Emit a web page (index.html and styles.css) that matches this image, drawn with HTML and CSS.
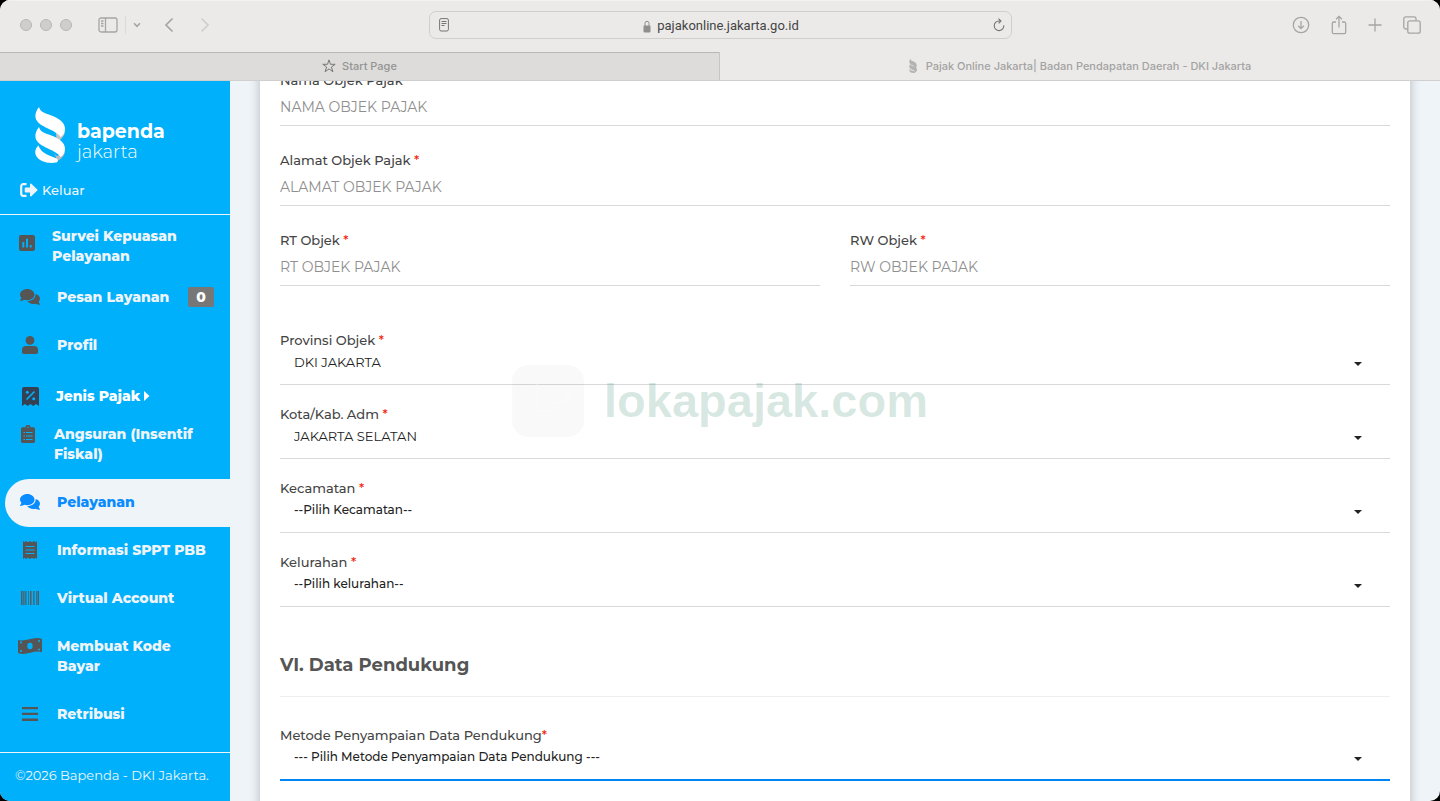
FILE: index.html
```html
<!DOCTYPE html>
<html lang="id">
<head>
<meta charset="utf-8">
<meta name="viewport" content="width=device-width, initial-scale=1">
<title>Pajak Online Jakarta| Badan Pendapatan Daerah - DKI Jakarta</title>
<link rel="stylesheet" href="styles.css">
</head>
<body>
<div class="window">
  <header class="toolbar">
    <div class="tools tools-left">
      <div class="lights"><i class="light"></i><i class="light"></i><i class="light"></i></div>
      <button class="tool" type="button" aria-label="Sidebar">
        <svg width="20" height="16" viewBox="0 0 20 16"><rect x="1" y="1" width="18" height="14" rx="2"/><path d="M7.500 1v14M3 4h2.500M3 6.500h2.500M3 9h2.500"/></svg>
      </button>
      <span class="divider"></span>
      <button class="tool tool-menu" type="button" aria-label="Grup tab">
        <svg width="8" height="6" viewBox="0 0 8 6"><path d="M1 1.300l3 3 3-3" stroke-width="1.600"/></svg>
      </button>
      <button class="tool tool-back" type="button" aria-label="Kembali">
        <svg width="10" height="16" viewBox="0 0 10 16"><path d="M8.500 1.500L2 8l6.500 6.500" stroke-width="1.700"/></svg>
      </button>
      <button class="tool tool-forward" type="button" aria-label="Maju">
        <svg width="10" height="16" viewBox="0 0 10 16"><path d="M1.500 1.500L8 8l-6.500 6.500" stroke-width="1.700"/></svg>
      </button>
    </div>
    <div class="address">
      <svg class="reader" width="10" height="14" viewBox="0 0 10 14"><rect x=".6" y=".6" width="8.800" height="12.400" rx="1.500"/><path d="M2.500 3.500h5M2.500 5.500h5M2.500 7.500h3"/></svg>
      <span class="site">
        <svg width="8" height="13" viewBox="0 0 8 13"><rect x=".5" y="5.500" width="7" height="7" rx="1" fill="#8f8f8f" stroke="none"/><path d="M2 6V3.300a2 2 0 0 1 4 0V6" stroke="#8f8f8f"/></svg>
        pajakonline.jakarta.go.id
      </span>
      <button class="tool reload" type="button" aria-label="Muat ulang">
        <svg width="12" height="14" viewBox="0 0 12 14"><path d="M10.800 7.300A4.800 4.800 0 1 1 6 3h1.800M5.500.7L8 3 5.600 5.400" stroke-width="1.100"/></svg>
      </button>
    </div>
    <div class="tools tools-right">
      <button class="tool" type="button" aria-label="Unduhan">
        <svg width="18" height="18" viewBox="0 0 18 18"><circle cx="9" cy="9" r="7.700"/><path d="M9 5v7.500M6.200 9.800L9 12.600l2.800-2.800"/></svg>
      </button>
      <button class="tool" type="button" aria-label="Bagikan">
        <svg width="16" height="20" viewBox="0 0 16 20"><path d="M5 7H2.800A1.500 1.500 0 0 0 1.300 8.500v8.700a1.500 1.500 0 0 0 1.500 1.500h10.400a1.500 1.500 0 0 0 1.500-1.500V8.500A1.500 1.500 0 0 0 13.200 7H11M8 12.500V1.500M5 4.300l3-3 3 3"/></svg>
      </button>
      <button class="tool" type="button" aria-label="Tab baru">
        <svg width="14" height="14" viewBox="0 0 14 14"><path d="M7 .5v13M.5 7h13"/></svg>
      </button>
      <button class="tool" type="button" aria-label="Semua tab">
        <svg width="18" height="18" viewBox="0 0 18 18"><rect x="4.800" y="4.800" width="12.400" height="12.400" rx="2"/><path d="M4.500 13H2.800a2 2 0 0 1-2-2V2.800a2 2 0 0 1 2-2H11a2 2 0 0 1 2 2v1.700"/></svg>
      </button>
    </div>
  </header>
  <nav class="tabs" aria-label="Tab">
    <a class="tab tab-start" href="#">
      <svg width="14" height="14" viewBox="0 0 14 14"><path d="M7 .9l1.500 4.400h4.700L9.400 8l1.500 4.700L7 9.900l-3.900 2.800L4.600 8 .8 5.300h4.700z" fill="none" stroke="#777" stroke-linejoin="round"/></svg>
      Start Page
    </a>
    <a class="tab tab-current" href="#">
      <svg width="8" height="14" viewBox="0 0 31 56"><path d="M5 0C2 4 0 8 1 13c1 9 14 11 21 17 3 2 5 5 4 9 6-8 6-18 0-24C20 9 7 8 5 0zM4 20c-3 4-4 8-3 12 1 8 13 10 20 15 3 2 4 4 2 7 8-3 10-11 7-17-5-10-24-8-26-17zM2 39c-4 9 3 17 15 17 5 0 8-1 8-4-2-5-20-3-23-13z" fill="#b3b3b3"/></svg>
      Pajak Online Jakarta| Badan Pendapatan Daerah - DKI Jakarta
    </a>
  </nav>

  <div class="page">
    <aside class="sidebar">
      <div class="brand">
        <svg width="31" height="56" viewBox="0 0 31 56">
          <path d="M18 22l6 4 6-1c-1 5-5 9-10 10 2-5 2-9-2-13z" fill="#c3c5c8"/>
          <path d="M17 45l5 4 8-4c-1 5-5 8-10 10 2-4 1-7-3-10z" fill="#b9bbbe"/>
          <path d="M4 0C1 4 0 7 .5 10.500 1.500 16 7 18.500 13 21.500c5 2.500 10 4.500 12.500 8.500 3-2 4.500-4.500 4.500-8C30 16 25.500 12.500 19 9.500 12 6.500 5 5.500 4 0z" fill="#fff"/>
          <path d="M4 20C1 24 0 27 .5 30.500 1.500 36 7 38.500 13 41.500c5 2.500 10 4.500 12.500 8.500 3-2 4.500-4.500 4.500-8 0-6-4.500-9.500-11-12.500C12 26.500 5 25.500 4 20z" fill="#fff"/>
          <path d="M3.500 38.500C0 41.500-.5 45.500 1 48.500c3 6 12 8.500 20 7 2.500-.8 2.500-3 .5-4-5.500-3-15-4-18-13z" fill="#fff"/>
        </svg>
        <div class="brand-name"><strong>bapenda</strong><span>jakarta</span></div>
      </div>
      <a class="logout" href="#">
        <svg width="18" height="14" viewBox="0 0 18 14"><path d="M6.500 1.200H3.200a2 2 0 0 0-2 2v7.600a2 2 0 0 0 2 2h3.300" fill="none" stroke="#eff4f9" stroke-width="2.200"/><path d="M5.500 4.500H10V1.300c0-.8.800-1.100 1.300-.6L17.300 6.400c.4.400.4.800 0 1.200l-6 5.700c-.5.500-1.300.2-1.300-.6V9.500H5.500a.8.800 0 0 1-.8-.8V5.300c0-.5.300-.8.800-.8z" fill="#eff4f9"/></svg>
        Keluar
      </a>
      <nav class="menu" aria-label="Menu utama">
        <a class="item item-survey" href="#">
          <span class="icon"><svg width="16" height="16" viewBox="0 0 16 16"><path fill-rule="evenodd" d="M2 0h12a2 2 0 0 1 2 2v12a2 2 0 0 1-2 2H2a2 2 0 0 1-2-2V2a2 2 0 0 1 2-2zM3.300 7v5.500h2V7zM7 3.800v8.700h2V3.800zM10.700 10v2.500h2V10z"/></svg></span>
          <span>Survei Kepuasan Pelayanan</span>
        </a>
        <a class="item" href="#">
          <span class="icon"><svg width="20" height="16" viewBox="0 0 20 16"><path d="M7.300 0C11.300 0 14.500 2.500 14.500 5.600s-3.200 5.600-7.200 5.600c-1.100 0-2.100-.2-3-.5C3.200 11.400 1.800 11.900.3 11.900c-.4 0-.4-.4-.2-.6.7-.8 1.200-1.700 1.300-2.600C.5 7.800 0 6.700 0 5.600 0 2.500 3.300 0 7.300 0z"/><path d="M15.700 5c2.500.7 4.300 2.600 4.300 4.800 0 1.100-.5 2.100-1.300 3 .1.900.6 1.600 1.200 2.300.3.300.1.700-.3.700-1.500 0-2.800-.5-3.900-1.100-.8.200-1.700.3-2.600.3-2.600 0-4.800-1.200-5.800-2.900 4.700 0 8.400-2.800 8.400-7.100z"/></svg></span>
          <span>Pesan Layanan</span><span class="badge">0</span>
        </a>
        <a class="item" href="#">
          <span class="icon"><svg width="16" height="18" viewBox="0 0 16 18"><circle cx="8" cy="4.400" r="4.400"/><path d="M4 10h8a4 4 0 0 1 4 4v2.300c0 1-.7 1.700-1.700 1.700H1.700C.7 18 0 17.300 0 16.300V14a4 4 0 0 1 4-4z"/></svg></span>
          <span>Profil</span>
        </a>
        <a class="item item-tax" href="#">
          <span class="icon"><svg width="17" height="19" viewBox="0 0 17 19"><path d="M2 0h13a2 2 0 0 1 2 2v17l-3-2-2.700 2-2.800-2-2.800 2L3 17l-3 2V2a2 2 0 0 1 2-2z" fill="#354052"/><path d="M12.500 4.500l-8 8" stroke="#00b0fa" stroke-width="1.700"/><circle cx="5.300" cy="5.200" r="1.500" fill="#00b0fa"/><circle cx="11.700" cy="11.800" r="1.500" fill="#00b0fa"/></svg></span>
          <span>Jenis Pajak</span>
          <svg class="caret" width="6" height="10" viewBox="0 0 6 10"><path d="M0 0l5.500 5L0 10z" fill="#fff"/></svg>
        </a>
        <a class="item item-installment" href="#">
          <span class="icon"><svg width="14" height="18" viewBox="0 0 14 18"><path d="M1.500 2.300h3a2.500 2.500 0 0 1 5 0h3A1.500 1.500 0 0 1 14 3.800v12.700a1.500 1.500 0 0 1-1.500 1.500h-11A1.500 1.500 0 0 1 0 16.500V3.800a1.500 1.500 0 0 1 1.500-1.500z"/><path d="M2.500 7.500H4M5 7.500h6.500M2.500 11H4M5 11h6.500M2.500 14.500H4M5 14.500h6.500M6.300 2.300h1.400" stroke="#00b0fa"/></svg></span>
          <span>Angsuran (Insentif Fiskal)</span>
        </a>
        <a class="item item-active" href="#" aria-current="page">
          <span class="icon"><svg width="20" height="16" viewBox="0 0 20 16"><path d="M7.300 0C11.300 0 14.500 2.500 14.500 5.600s-3.200 5.600-7.200 5.600c-1.100 0-2.100-.2-3-.5C3.200 11.400 1.800 11.900.3 11.900c-.4 0-.4-.4-.2-.6.7-.8 1.200-1.700 1.300-2.600C.5 7.800 0 6.700 0 5.600 0 2.500 3.300 0 7.300 0z"/><path d="M15.700 5c2.500.7 4.300 2.600 4.300 4.800 0 1.100-.5 2.100-1.300 3 .1.900.6 1.600 1.200 2.300.3.300.1.700-.3.700-1.500 0-2.800-.5-3.900-1.100-.8.200-1.700.3-2.600.3-2.600 0-4.800-1.200-5.800-2.900 4.700 0 8.400-2.800 8.400-7.100z"/></svg></span>
          <span>Pelayanan</span>
        </a>
        <a class="item" href="#">
          <span class="icon"><svg width="14" height="18" viewBox="0 0 14 18"><path d="M0 0l1.500 1.300L3 0l2 1.300L7 0l2 1.300L11 0l1.500 1.300L14 0v18l-1.500-1.300L11 18l-2-1.300L7 18l-2-1.300L3 18l-1.500-1.300L0 18z"/><path d="M2.500 5.500h9M2.500 9h9M2.500 12.500h9" stroke="#00b0fa"/></svg></span>
          <span>Informasi SPPT PBB</span>
        </a>
        <a class="item" href="#">
          <span class="icon"><svg width="18" height="14" viewBox="0 0 18 14" fill="none" stroke="#555"><path d="M.5 0v14M9.500 0v14M17.500 0v14" opacity=".9"/><path d="M2.500 0v14M4.500 0v14M7.500 0v14M12.500 0v14M15.500 0v14" opacity=".7"/><path d="M1.500 0v14M3.500 0v14M5.500 0v14M10.500 0v14M13.500 0v14M16.500 0v14" opacity=".45"/></svg></span>
          <span>Virtual Account</span>
        </a>
        <a class="item" href="#">
          <span class="icon"><svg width="24" height="16" viewBox="0 0 24 16"><path d="M0 2C8 4.500 15-2 23.500.8q.5.200.5.700v12.800C16 11.500 9 18 .5 15.200q-.5-.200-.5-.700z"/><g fill="#00b0fa"><ellipse cx="12" cy="8" rx="2.700" ry="3.300"/><circle cx="3" cy="4.600" r="1"/><circle cx="21" cy="3" r="1"/><circle cx="3" cy="13" r="1"/><circle cx="21" cy="11.400" r="1"/></g></svg></span>
          <span>Membuat Kode Bayar</span>
        </a>
        <a class="item" href="#">
          <span class="icon"><svg width="16" height="14" viewBox="0 0 16 14"><path d="M0 0h16v2.300H0zM0 5.800h16v2.300H0zM0 11.600h16v2.300H0z"/></svg></span>
          <span>Retribusi</span>
        </a>
      </nav>
      <footer class="copyright">©2026 Bapenda - DKI Jakarta.</footer>
    </aside>

    <main class="content">
      <form class="card">
        <div class="field">
          <label for="nama">Nama Objek Pajak</label>
          <input id="nama" type="text" placeholder="NAMA OBJEK PAJAK">
        </div>
        <div class="field">
          <label for="alamat">Alamat Objek Pajak <span class="req">*</span></label>
          <input id="alamat" type="text" placeholder="ALAMAT OBJEK PAJAK">
        </div>
        <div class="columns">
          <div class="field">
            <label for="rt">RT Objek <span class="req">*</span></label>
            <input id="rt" type="text" placeholder="RT OBJEK PAJAK">
          </div>
          <div class="field">
            <label for="rw">RW Objek <span class="req">*</span></label>
            <input id="rw" type="text" placeholder="RW OBJEK PAJAK">
          </div>
        </div>
        <div class="region">
          <div class="choice">
            <label for="provinsi">Provinsi Objek <span class="req">*</span></label>
            <div class="select"><select id="provinsi"><option>DKI JAKARTA</option></select></div>
          </div>
          <div class="choice">
            <label for="kota">Kota/Kab. Adm <span class="req">*</span></label>
            <div class="select"><select id="kota"><option>JAKARTA SELATAN</option></select></div>
          </div>
          <div class="choice">
            <label for="kecamatan">Kecamatan <span class="req">*</span></label>
            <div class="select select-empty"><select id="kecamatan"><option>--Pilih Kecamatan--</option></select></div>
          </div>
          <div class="choice">
            <label for="kelurahan">Kelurahan <span class="req">*</span></label>
            <div class="select select-empty"><select id="kelurahan"><option>--Pilih kelurahan--</option></select></div>
          </div>
        </div>
        <h2 class="section-title">VI. Data Pendukung</h2>
        <div class="choice">
          <label for="metode">Metode Penyampaian Data Pendukung<span class="req">*</span></label>
          <div class="select select-empty select-focus"><select id="metode"><option>--- Pilih Metode Penyampaian Data Pendukung ---</option></select></div>
        </div>
      </form>
    </main>
  </div>

  <div class="watermark" aria-hidden="true">
    <svg width="72" height="72" viewBox="0 0 72 72"><rect width="72" height="72" rx="16" fill="#000" opacity=".025"/><path d="M25 17v29h18M37 38h12a7 7 0 0 0 7-7v-4" fill="none" stroke="#fff" stroke-width="3" opacity=".25"/></svg>
    <span>lokapajak.com</span>
  </div>
</div>
</body>
</html>
```

FILE: styles.css
```css
* {
  box-sizing: border-box;
}

body {
  margin: 0;
  background: #000;
  color: #444;
  font: 14px/20px Montserrat, Inter, sans-serif;
}

a {
  color: inherit;
  text-decoration: none;
}

button {
  padding: 0;
  border: 0;
  background: none;
}

svg {
  display: block;
  flex: none;
}

.window {
  position: relative;
  display: flex;
  flex-direction: column;
  height: 100vh;
  overflow: hidden;
  border-radius: 10px;
  background: #eff4f9;
}

/* Browser toolbar */
.toolbar {
  display: grid;
  grid-template-columns: 1fr minmax(200px, 583px) 1fr;
  align-items: center;
  height: 52px;
  flex: none;
  padding-bottom: 2px;
  background: #ebeae8;
  box-shadow: inset 0 1px #f3f2f1;
}

.tools {
  display: flex;
  align-items: center;
}

.tools-left {
  padding-left: 20px;
}

.tools-right {
  justify-content: flex-end;
  gap: 21px;
  padding-right: 19px;
}

.tool svg,
.reader {
  fill: none;
  stroke: #a6a5a4;
  stroke-width: 1.3;
}

.lights {
  display: flex;
  gap: 8px;
  margin-right: 26px;
}

.light {
  width: 12px;
  height: 12px;
  border: 1px solid #b8b7b6;
  border-radius: 50%;
  background: #cfcecd;
}

.divider {
  width: 1px;
  height: 18px;
  margin: 0 7px;
  background: #dad9d8;
}

.tool-back {
  margin: 0 26px 0 23px;
}

.tool-forward svg {
  stroke: #cfcecd;
}

.address {
  display: flex;
  align-items: center;
  justify-content: space-between;
  height: 28px;
  padding: 0 5px 0 9px;
  border: 1px solid #d0cfce;
  border-radius: 7px;
}

.address .reader,
.address .reload svg {
  stroke: #757575;
  stroke-width: 1;
}

.site {
  display: flex;
  align-items: center;
  gap: 6px;
  padding-top: 2px;
  color: #454545;
  font: 13px/20px Roboto, sans-serif;
}

.site svg {
  fill: none;
}

.tabs {
  display: grid;
  grid-template-columns: 1fr 1fr;
  height: 29px;
  flex: none;
  margin-bottom: -1px;
  border-bottom: 1px solid #cfcfcf;
  background: #ebeae8;
  z-index: 1;
}

.tab {
  display: flex;
  align-items: center;
  justify-content: center;
  gap: 6px;
  color: #a3a3a3;
  font: 500 11px/16px Inter, sans-serif;
}

.tab-start {
  padding-bottom: 1px;
  border-right: 1px solid #c6c5c4;
  background: #dddcda;
  box-shadow: inset 0 1px #b8b7b6;
  color: #949494;
}

.tab-current {
  gap: 9px;
}

/* Page */
.page {
  display: flex;
  flex: 1;
  min-height: 0;
}

.sidebar {
  display: flex;
  flex-direction: column;
  width: 230px;
  flex: none;
  background: #00b0fa;
  color: #eff4f9;
}

.brand {
  display: flex;
  align-items: flex-end;
  gap: 11px;
  padding: 27px 20px 0 35px;
  color: #fff;
}

.brand-name {
  display: flex;
  flex-direction: column;
  padding-bottom: 1px;
  font-size: 19px;
  line-height: 20px;
}

.brand-name span {
  font-size: 18px;
  font-weight: 300;
}

.logout {
  display: flex;
  align-items: center;
  gap: 4px;
  padding: 17px 20px 14px;
  border-bottom: 1px solid #eff4f9;
  font-size: 13px;
  font-weight: 500;
}

.menu {
  flex: 1;
  min-height: 0;
  overflow: hidden;
  font-weight: 800;
}

.item {
  display: flex;
  align-items: flex-start;
  margin-left: 5px;
  padding: 13px 16px 15px 12px;
}

.icon {
  display: flex;
  align-items: center;
  justify-content: center;
  width: 26px;
  height: 20px;
  margin-right: 14px;
  flex: none;
  fill: #555;
}

.item-survey {
  padding: 11px 30px 8px 9px;
}

.item-survey .icon {
  height: 34px;
  margin-right: 12px;
}

.badge {
  min-width: 26px;
  margin-left: auto;
  border-radius: 2px;
  background: #777;
  color: #fff;
  text-align: center;
}

.item-tax {
  align-items: center;
  margin-top: 3px;
  color: #fff;
}

.item-tax .icon {
  margin-right: 13px;
}

.caret {
  margin-left: 4px;
}

.item-installment {
  padding: 3px 30px 15px 10px;
}

.item-installment .icon {
  margin-right: 13px;
}

.item-active {
  border-radius: 24px 0 0 24px;
  background: #eff4f9;
  color: #0a8cff;
}

.item-active .icon {
  fill: #0a8cff;
}

.copyright {
  padding: 12px 15px 16px;
  border-top: 1px solid #eff4f9;
  font-size: 13px;
}

.content {
  flex: 1;
  min-width: 0;
  overflow: hidden;
  padding: 0 30px;
}

/* The form is scrolled partway under the browser tabs */
.card {
  min-height: 110%;
  margin-top: -30px;
  padding: 20px;
  background: #fff;
  box-shadow: 0 0 10px rgba(0, 0, 0, 0.25);
}

.field {
  margin-bottom: 24px;
}

label {
  display: block;
  font-size: 13px;
  font-weight: 500;
}

.req {
  color: #f21d0d;
}

input,
select {
  display: block;
  width: 100%;
  margin: 0;
  border: 0;
  border-bottom: 1px solid #d9d9d9;
  border-radius: 0;
  outline: 0;
  background: none;
  font: inherit;
}

input {
  height: 36px;
  padding: 0 0 2px;
}

input::placeholder {
  color: #8f8f8f;
  opacity: 1;
}

.columns {
  display: grid;
  grid-template-columns: 1fr 1fr;
  gap: 30px;
}

.region {
  display: grid;
  gap: 19px;
  margin-top: 20px;
}

.select {
  position: relative;
}

.select::after {
  content: "";
  position: absolute;
  top: 12px;
  right: 28px;
  border: 4px solid transparent;
  border-top-color: #222;
  border-bottom: 0;
  pointer-events: none;
}

select {
  height: 35px;
  padding: 0 40px 10px 14px;
  appearance: none;
  color: #222;
  font-size: 13px;
}

.select-empty select {
  font-size: 12px;
  font-weight: 500;
}

.select-focus select {
  height: 36px;
  border-bottom: 2px solid #0085f5;
}

.section-title {
  margin: 45px 0 28px;
  padding-bottom: 18px;
  border-bottom: 1px solid #eee;
  color: #555;
  font-size: 18px;
  font-weight: 700;
  line-height: 26px;
}

.watermark {
  position: absolute;
  top: 50%;
  left: 50%;
  z-index: 2;
  display: flex;
  align-items: center;
  gap: 20px;
  transform: translate(-50%, -50%);
  color: rgba(0, 110, 70, 0.155);
  font: bold 47px/72px "Liberation Sans", Arial, sans-serif;
  pointer-events: none;
}
```
